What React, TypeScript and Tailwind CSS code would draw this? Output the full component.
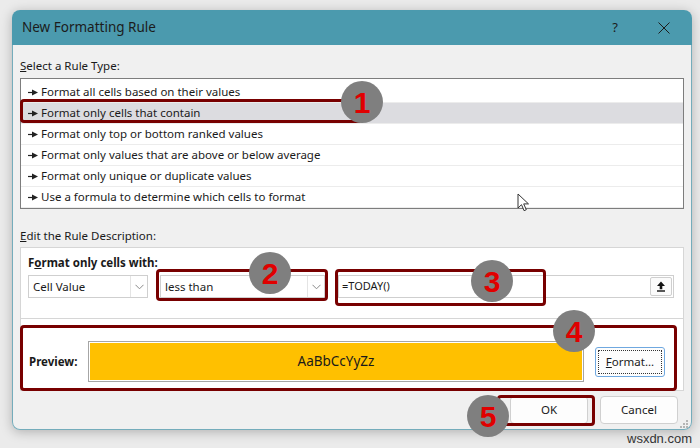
const ruleTypes = [
  "Format all cells based on their values",
  "Format only cells that contain",
  "Format only top or bottom ranked values",
  "Format only values that are above or below average",
  "Format only unique or duplicate values",
  "Use a formula to determine which cells to format",
];

const RowArrow = () => (
  <svg width="10" height="7" viewBox="0 0 10 7" className="shrink-0">
    <path d="M0 3.5h5" stroke="#222" strokeWidth="1.2" />
    <path d="M4 0.5l6 3-6 3z" fill="#222" />
  </svg>
);

const Chevron = () => (
  <svg width="9" height="6" viewBox="0 0 9 6">
    <path d="M0.5 0.8l4 4 4-4" fill="none" stroke="#8a8a8a" strokeWidth="1" />
  </svg>
);

const Marker = ({ n, className }: { n: number; className: string }) => (
  <div
    className={`absolute flex h-[42px] w-[42px] items-center justify-center rounded-full bg-[#7f7f7f] font-['Liberation_Sans',sans-serif] text-[30px] font-bold text-[#e00000] ${className}`}
  >
    {n}
  </div>
);

const Outline = ({ className }: { className: string }) => (
  <div
    className={`absolute rounded-[4px] border-[3px] border-[#780000] ${className}`}
  />
);

export default function App() {
  return (
    <div className="relative h-[448px] w-[700px] overflow-hidden bg-[#ebebeb] pl-[12px] pt-[10px] font-['Noto_Sans',sans-serif] text-[11.5px] text-[#1a1a1a]">
      <div className="flex h-[420px] w-[680px] flex-col rounded-[8px] shadow-[0_2px_12px_rgba(0,0,0,0.25)]">
        {/* title bar */}
        <div className="flex h-[35px] items-center justify-between rounded-t-[8px] bg-[#4b9aae] pl-[10px] pr-[22px]">
          <span className="text-[13.5px] text-[#1c1c1c]">New Formatting Rule</span>
          <div className="flex items-center gap-[40px] text-[#1c1c1c]">
            <span className="text-[13px]">?</span>
            <svg width="12" height="12" viewBox="0 0 12 12">
              <path d="M0.5 0.5l11 11M11.5 0.5l-11 11" stroke="#1c1c1c" strokeWidth="1" />
            </svg>
          </div>
        </div>

        {/* body */}
        <div className="flex flex-1 flex-col rounded-b-[8px] border-x border-b border-[#74acbb] bg-[#f0f0f0] px-[7px] pt-[13px]">
          <div className="leading-[16px]">
            <span className="underline">S</span>elect a Rule Type:
          </div>
          <div className="mt-[4px] h-[131px] border border-[#7d7d7d] bg-white pt-[3px]">
            {ruleTypes.map((r, i) => (
              <div
                key={r}
                className={`flex h-[21px] items-center gap-[3px] border-b border-[#ececec] pl-[7px] ${
                  i === 1 ? "bg-[#dcdce0]" : ""
                }`}
              >
                <RowArrow />
                <span>{r}</span>
              </div>
            ))}
          </div>

          <div className="mt-[19px] leading-[16px]">
            <span className="underline">E</span>dit the Rule Description:
          </div>
          <div className="mt-[3px] border border-[#d6d6d6] bg-white">
            <div className="border-b border-[#d6d6d6] px-[7px] pb-[20px] pt-[7px]">
              <div className="font-bold leading-[16px]">
                F<span className="underline">o</span>rmat only cells with:
              </div>
              <div className="mt-[4px] flex h-[23px] gap-[12px]">
                <div className="flex w-[120px] items-center border border-[#cfcfcf] bg-white">
                  <span className="flex-1 pl-[4px]">Cell Value</span>
                  <div className="flex h-full w-[17px] items-center justify-center border-l border-[#e4e4e4]">
                    <Chevron />
                  </div>
                </div>
                <div className="flex w-[165px] items-center border border-[#cfcfcf] bg-white">
                  <span className="flex-1 pl-[4px]">less than</span>
                  <div className="flex h-full w-[17px] items-center justify-center border-l border-[#e4e4e4]">
                    <Chevron />
                  </div>
                </div>
                <div className="ml-[1px] flex w-[336px] items-center border border-[#cfcfcf] bg-white pr-[1px]">
                  <span className="flex-1 pl-[3px] text-[11px]">=TODAY()</span>
                  <div className="flex h-[19px] w-[22px] items-center justify-center rounded-[2px] border border-[#cfcfcf] bg-[#fbfbfb]">
                    <svg width="10" height="11" viewBox="0 0 10 11">
                      <path d="M5 0.5l4 4.5H6.3v3.2H3.7V5H1z" fill="#111" />
                      <path d="M1 10h8" stroke="#111" strokeWidth="1.4" />
                    </svg>
                  </div>
                </div>
              </div>
            </div>
            <div className="flex items-center pb-[8px] pl-[8px] pr-[18px] pt-[22px]">
              <span className="w-[59px] font-bold">Preview:</span>
              <div className="flex h-[41px] w-[496px] items-center justify-center border border-[#a6a6a6] bg-[#ffc000] text-[13.5px] shadow-[inset_0_0_0_1px_#fff]">
                AaBbCcYyZz
              </div>
              <div className="ml-auto flex h-[30px] w-[70px] items-center justify-center rounded-[3px] border border-[#6fa8e0] bg-[#fdfdfd] p-[2px]">
                <div className="flex h-full w-full items-center justify-center border border-dotted border-[#333]">
                  <span className="underline">F</span>ormat...
                </div>
              </div>
            </div>
          </div>

          <div className="mt-[5px] flex justify-end gap-[12px] pr-[6px]">
            <div className="flex h-[28px] w-[78px] items-center justify-center rounded-[4px] border border-[#d0d0d0] bg-[#fdfdfd]">
              OK
            </div>
            <div className="flex h-[28px] w-[78px] items-center justify-center rounded-[4px] border border-[#d0d0d0] bg-[#fdfdfd]">
              Cancel
            </div>
          </div>
        </div>
      </div>

      {/* resize grip */}
      <svg className="absolute left-[679px] top-[419px]" width="10" height="10" viewBox="0 0 10 10">
        {[
          [7, 1],
          [4, 4],
          [7, 4],
          [1, 7],
          [4, 7],
          [7, 7],
        ].map(([x, y]) => (
          <rect key={`${x}-${y}`} x={x} y={y} width="2" height="2" fill="#b5b5b5" />
        ))}
      </svg>

      {/* mouse pointer */}
      <svg className="absolute left-[517px] top-[193px]" width="13" height="19" viewBox="0 0 13 19">
        <path
          d="M1 1v14l3.5-3.3 2.6 6 2.2-1-2.6-5.8H11.5z"
          fill="#fff"
          stroke="#333"
          strokeWidth="1"
          strokeLinejoin="round"
        />
      </svg>

      {/* callouts */}
      <Outline className="left-[20px] top-[99px] h-[24px] w-[342px]" />
      <Outline className="left-[156px] top-[269px] h-[32px] w-[172px]" />
      <Outline className="left-[335px] top-[269px] h-[37px] w-[211px]" />
      <Outline className="left-[20px] top-[325px] h-[66px] w-[657px]" />
      <Outline className="left-[497px] top-[395px] h-[31px] w-[98px]" />
      <Marker n={1} className="left-[341px] top-[81px]" />
      <Marker n={2} className="left-[249px] top-[252px]" />
      <Marker n={3} className="left-[471px] top-[260px]" />
      <Marker n={4} className="left-[553px] top-[310px]" />
      <Marker n={5} className="left-[467px] top-[395px]" />

      <span className="absolute left-[627px] top-[429px] font-['Liberation_Sans',sans-serif] text-[13px] text-[#333]">
        wsxdn.com
      </span>
    </div>
  );
}
